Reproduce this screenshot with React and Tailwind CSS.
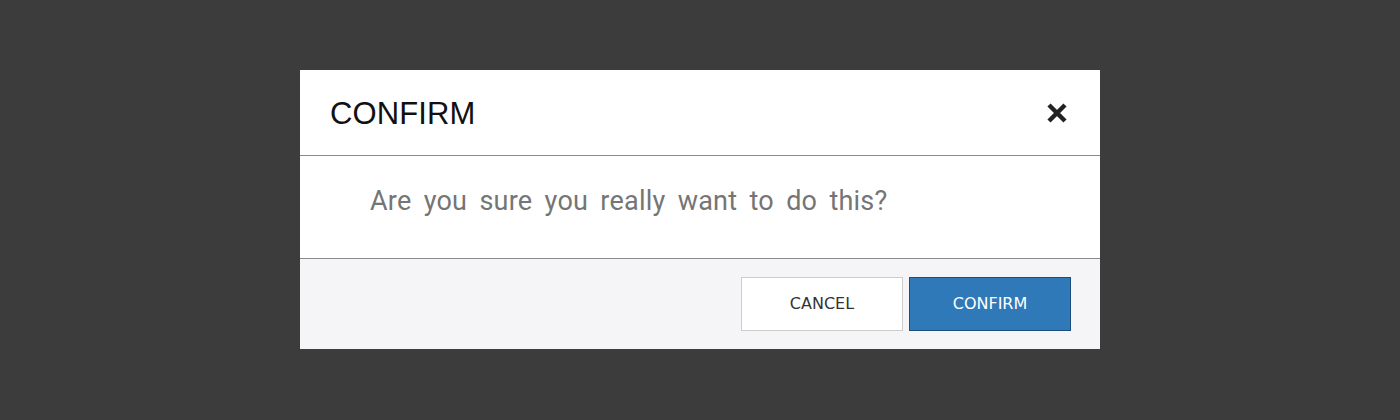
export default function App() {
  return (
    <div className="w-[1400px] h-[420px] bg-[#3c3c3c] flex items-start justify-center pt-[70px]">
      <div className="w-[800px] bg-white flex flex-col">
        {/* Header */}
        <div className="h-[86px] flex items-center justify-between pl-[30px] pr-[31px] border-b border-[#8a8a8a]">
          <h2 className="text-[31px] text-[#111] font-['Liberation_Sans',Arial,sans-serif] leading-none pt-[2px] tracking-[0.1px]">CONFIRM</h2>
          <button type="button" className="w-[24px] h-[24px] flex items-center justify-center" aria-label="Close">
            <svg width="22" height="22" viewBox="0 0 22 22">
              <path d="M3 3 L19 19 M19 3 L3 19" stroke="#222" strokeWidth="4.5" strokeLinecap="butt" />
            </svg>
          </button>
        </div>

        {/* Body */}
        <div className="h-[103px] flex items-center pl-[70px] pb-[12px] border-b border-[#8a8a8a]">
          <p className="text-[27px] leading-none text-[#757575] font-['Roboto',sans-serif] tracking-[0.2px] [word-spacing:5.4px]">
            Are you sure you really want to do this?
          </p>
        </div>

        {/* Footer */}
        <div className="h-[90px] bg-[#f5f5f7] flex items-center justify-end gap-[6px] pr-[29px]">
          <button
            type="button"
            className="w-[162px] h-[54px] bg-white border border-[#cccccc] text-[#333] text-[16px] font-['DejaVu_Sans',sans-serif]"
          >
            CANCEL
          </button>
          <button
            type="button"
            className="w-[162px] h-[54px] bg-[#3079b9] border border-[#1d4f7e] text-white text-[16px] font-['DejaVu_Sans',sans-serif]"
          >
            CONFIRM
          </button>
        </div>
      </div>
    </div>
  );
}
